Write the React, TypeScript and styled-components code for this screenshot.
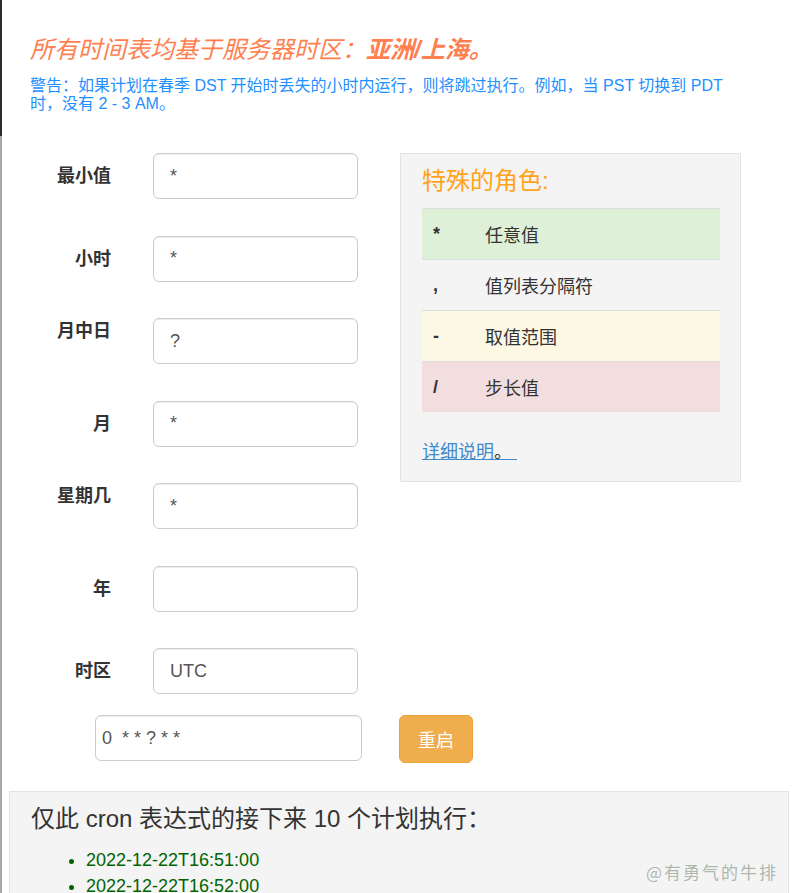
import React from 'react';
import styled, { createGlobalStyle } from 'styled-components';

const GlobalStyle = createGlobalStyle`
  html, body {
    margin: 0;
    padding: 0;
    background: #fff;
    overflow: hidden;
  }
  body {
    font-family: "Liberation Sans", "Noto Sans CJK SC", sans-serif;
    color: #333;
  }
  * {
    box-sizing: border-box;
  }
`;

const Page = styled.div`
  position: relative;
  display: flex;
  height: 100vh;
  overflow: hidden;
`;

// thin edge of the page behind the dialog
const EdgeStrip = styled.div`
  flex: 0 0 2px;
  background: linear-gradient(to bottom, #2b2b2b 0, #2b2b2b 136px, #a9a9a9 136px);
`;

const Body = styled.div`
  flex: 1;
  padding: 0 7px;
`;

const Header = styled.div`
  padding: 36px 21px 0;
`;

const Title = styled.h3`
  margin: 0;
  font-size: 24px;
  line-height: 28px;
  font-style: italic;
  font-weight: normal;
  color: #ff7f50;
`;

const Zone = styled.strong`
  font-weight: bold;
`;

const Warning = styled.p`
  max-width: 700px;
  margin: 13px 0 0;
  font-size: 16px;
  line-height: 18px;
  color: #1e90ff;
`;

const FormArea = styled.div`
  display: flex;
  align-items: flex-start;
  margin-top: 40px;
`;

const Fields = styled.div`
  width: 391px;
  display: grid;
  grid-template-columns: 102px 205px;
  column-gap: 42px;
  row-gap: 36.5px;
  align-items: start;
`;

const FieldLabel = styled.label<{ $lift?: boolean }>`
  text-align: right;
  font-weight: bold;
  font-size: 18px;
  line-height: 46px;
  color: #333;
  margin-top: ${(p) => (p.$lift ? '-10px' : '0')};
`;

const TextInput = styled.input`
  width: 100%;
  height: 46px;
  padding: 10px 16px;
  font-family: inherit;
  font-size: 18px;
  color: #555;
  background: #fff;
  border: 1px solid #ccc;
  border-radius: 6px;
  box-shadow: inset 0 1px 1px rgba(0, 0, 0, 0.075);
  outline: none;
`;

const Panel = styled.div`
  width: 341px;
  height: 329px;
  background: #f4f4f4;
  border: 1px solid #e3e3e3;
  padding: 12px 21px 0;
`;

const PanelTitle = styled.h4`
  margin: 0 0 12px;
  font-size: 24px;
  line-height: 30px;
  font-weight: normal;
  color: #ffa31a;
`;

const CharTable = styled.div`
  width: 298px;
`;

const tones: Record<string, string> = {
  success: '#dff0d8',
  plain: 'transparent',
  warning: '#fcf8e3',
  danger: '#f2dede',
};

const CharRow = styled.div<{ $tone: string }>`
  display: grid;
  grid-template-columns: 63px 1fr;
  align-items: center;
  height: 51px;
  border-top: 1px solid #ddd;
  background: ${(p) => tones[p.$tone]};
  font-size: 18px;
  color: #333;
`;

const Symbol = styled.span`
  padding-left: 11px;
  font-weight: bold;
`;

const MoreLink = styled.a`
  display: inline-block;
  margin-top: 27px;
  font-size: 18px;
  line-height: 26px;
  color: #428bca;
  text-decoration: underline;
  cursor: pointer;

  span {
    color: #333;
  }
`;

const CronRow = styled.div`
  display: flex;
  align-items: flex-start;
  gap: 37px;
  margin-top: 21px;
  padding-left: 86px;
`;

const CronInput = styled(TextInput)`
  width: 267px;
  padding: 10px 6px;
  white-space: pre;
`;

const ResetButton = styled.button`
  height: 48px;
  padding: 0 18px;
  font-family: inherit;
  font-size: 18px;
  color: #fff;
  background: #f0ad4e;
  border: 1px solid #eea236;
  border-radius: 6px;
  cursor: pointer;
`;

const Schedule = styled.div`
  margin-top: 28px;
  background: #f4f4f4;
  border: 1px solid #e3e3e3;
  padding: 12px 21px 20px;
`;

const ScheduleTitle = styled.h4`
  margin: 0;
  font-size: 24px;
  line-height: 30px;
  font-weight: normal;
  color: #333;
`;

const RunList = styled.ul`
  margin: 13px 0 0;
  padding-left: 55px;
  font-size: 18px;
  line-height: 26px;
  color: #006400;
`;

const Watermark = styled.div`
  position: absolute;
  right: 18px;
  bottom: 9px;
  font-family: "Noto Sans CJK SC", sans-serif;
  font-size: 17px;
  letter-spacing: 2px;
  color: rgba(160, 172, 160, 0.85);
`;

const fields = [
  { label: '最小值', value: '*' },
  { label: '小时', value: '*' },
  { label: '月中日', value: '?', lift: true },
  { label: '月', value: '*' },
  { label: '星期几', value: '*', lift: true },
  { label: '年', value: '' },
  { label: '时区', value: 'UTC' },
];

const specials = [
  { sym: '*', text: '任意值', tone: 'success' },
  { sym: ',', text: '值列表分隔符', tone: 'plain' },
  { sym: '-', text: '取值范围', tone: 'warning' },
  { sym: '/', text: '步长值', tone: 'danger' },
];

const runs = Array.from({ length: 10 }, (_, i) => `2022-12-22T${i < 9 ? `16:5${i + 1}` : '17:00'}:00`);

const App = () => {
  return (
    <Page>
      <GlobalStyle />
      <EdgeStrip />
      <Body>
        <Header>
          <Title>
            所有时间表均基于服务器时区：<Zone>亚洲/上海。</Zone>
          </Title>
          <Warning>
            警告：如果计划在春季 DST 开始时丢失的小时内运行，则将跳过执行。例如，当 PST 切换到 PDT 时，没有 2 - 3 AM。
          </Warning>
        </Header>

        <FormArea>
          <Fields>
            {fields.map((f) => (
              <React.Fragment key={f.label}>
                <FieldLabel $lift={f.lift}>{f.label}</FieldLabel>
                <TextInput defaultValue={f.value} />
              </React.Fragment>
            ))}
          </Fields>

          <Panel>
            <PanelTitle>特殊的角色:</PanelTitle>
            <CharTable>
              {specials.map((s) => (
                <CharRow key={s.sym} $tone={s.tone}>
                  <Symbol>{s.sym}</Symbol>
                  <span>{s.text}</span>
                </CharRow>
              ))}
            </CharTable>
            <MoreLink>
              详细说明<span>。&nbsp;</span>
            </MoreLink>
          </Panel>
        </FormArea>

        <CronRow>
          <CronInput defaultValue="0  * * ? * *" />
          <ResetButton>重启</ResetButton>
        </CronRow>

        <Schedule>
          <ScheduleTitle>仅此 cron 表达式的接下来 10 个计划执行：</ScheduleTitle>
          <RunList>
            {runs.map((r) => (
              <li key={r}>{r}</li>
            ))}
          </RunList>
        </Schedule>
      </Body>
      <Watermark>@有勇气的牛排</Watermark>
    </Page>
  );
};

export default App;
